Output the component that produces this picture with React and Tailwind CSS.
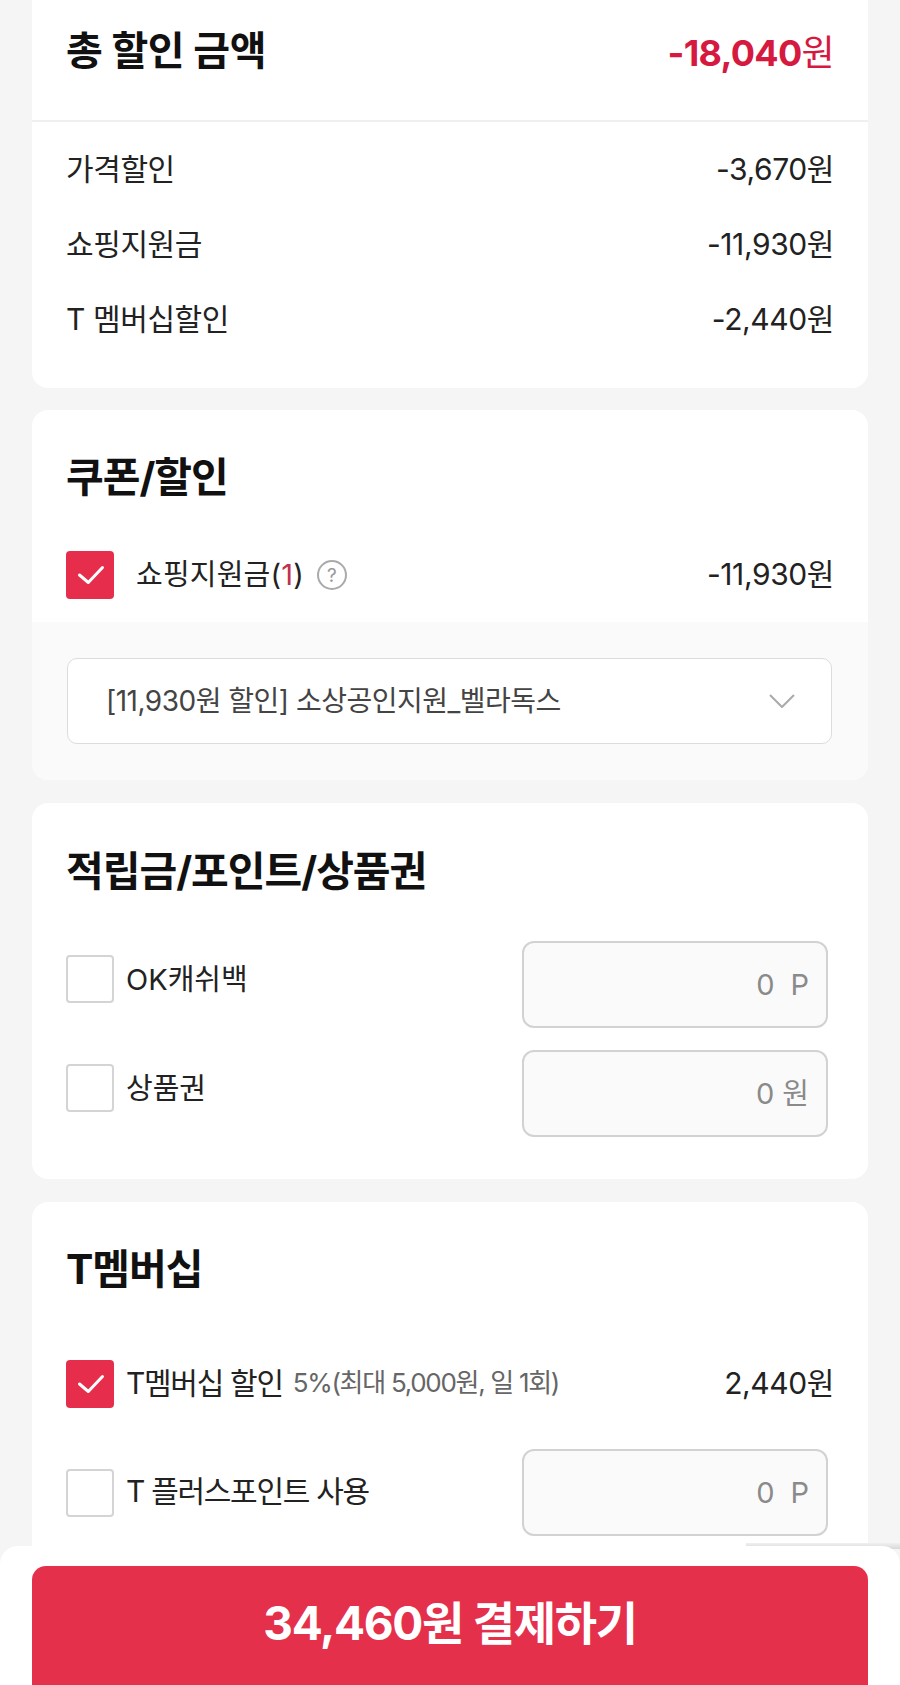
import React from 'react';

const font = { fontFamily: 'Inter, "Noto Sans CJK KR", "Noto Sans", sans-serif' };

const Checkbox = ({ checked }) => (
    <div className={checked
        ? "w-12 h-12 shrink-0 rounded-[4px] bg-[#e62e4c] flex items-center justify-center"
        : "w-12 h-12 shrink-0 rounded-[4px] bg-white border-2 border-[#d4d4d4]"}>
        {checked && (
            <svg width="48" height="48" viewBox="0 0 48 48" fill="none">
                <path d="M13.5 24L22.3 31.5L36.5 16.5" stroke="#fff" strokeWidth="3" strokeLinecap="round" strokeLinejoin="round" />
            </svg>
        )}
    </div>
);

const AmountInput = ({ unit, gap }) => (
    <div className={`w-[306px] h-[87px] rounded-[12px] border-2 border-[#d2d2d2] bg-[#fafafa] flex items-center justify-end pr-[17px] text-[29px] text-[#8a8a8a] ${gap}`}>
        <span>0</span>
        <span>{unit}</span>
    </div>
);

const Heading = ({ children }) => (
    <h2 className="text-[41px] leading-[56px] font-bold text-[#111] tracking-[-1px]">{children}</h2>
);

const summary = [
    { label: "가격할인", value: "-3,670원" },
    { label: "쇼핑지원금", value: "-11,930원" },
    { label: "T 멤버십할인", value: "-2,440원" },
];

export default function App() {
    return (
        <div style={font} className="relative w-[900px] h-[1685px] overflow-hidden bg-[#f5f5f5] text-[#222]">
            <div className="px-8 flex flex-col">
                {/* 총 할인 금액 */}
                <section className="bg-white rounded-b-[16px] h-[388px]">
                    <div className="h-[122px] border-b-2 border-[#efefef] px-[34px] pt-[23px] flex items-start justify-between">
                        <h1 className="text-[40px] leading-[56px] font-bold text-[#111] tracking-[-0.4px]">총 할인 금액</h1>
                        <p className="text-[36px] leading-[56px] font-bold text-[#d6193f] tracking-[-0.7px] mt-[2px]">
                            -18,040<span className="font-normal">원</span>
                        </p>
                    </div>
                    <div className="px-[34px] pt-[25px] flex flex-col gap-[31px]">
                        {summary.map((row) => (
                            <div key={row.label} className="flex justify-between text-[30px] leading-[44px]">
                                <span className="tracking-[-0.4px]">{row.label}</span>
                                <span className="tracking-[-0.4px]">{row.value}</span>
                            </div>
                        ))}
                    </div>
                </section>

                {/* 쿠폰/할인 */}
                <section className="mt-[22px] bg-white rounded-[16px] h-[370px] overflow-hidden flex flex-col">
                    <div className="px-[34px] pt-[39px] h-[212px]">
                        <Heading>쿠폰/할인</Heading>
                        <div className="mt-[46px] flex items-center">
                            <Checkbox checked />
                            <span className="ml-[22px] text-[29px] leading-[44px] tracking-[0.2px]">
                                쇼핑지원금(<span className="text-[#c0324f]">1</span>)
                            </span>
                            <span className="ml-[13px] w-[30px] h-[30px] rounded-full border-2 border-[#aaa] text-[#999] text-[19px] leading-none flex items-center justify-center">?</span>
                            <span className="ml-auto text-[30px] leading-[44px] tracking-[-0.4px] -mt-[3px]">-11,930원</span>
                        </div>
                    </div>
                    <div className="flex-1 bg-[#fafafa] pl-[35px] pr-[36px] pt-9">
                        <div className="h-[86px] rounded-[10px] border-[1.5px] border-[#dcdcdc] bg-white pl-[38px] pr-[35px] flex items-center justify-between">
                            <span className="text-[28px] text-[#444] tracking-[-0.5px]">[11,930원 할인] 소상공인지원_벨라독스</span>
                            <svg width="28" height="16" viewBox="0 0 28 16" fill="none">
                                <path d="M2 2L14 14L26 2" stroke="#aaa" strokeWidth="2" strokeLinejoin="round" />
                            </svg>
                        </div>
                    </div>
                </section>

                {/* 적립금/포인트/상품권 */}
                <section className="mt-[23px] bg-white rounded-[16px] h-[376px] px-[34px] pt-[40px]">
                    <Heading>적립금/포인트/상품권</Heading>
                    <div className="mt-[42px] flex flex-col gap-[22px] pr-[6px]">
                        <div className="flex items-start">
                            <div className="mt-[13.5px]"><Checkbox /></div>
                            <span className="ml-3 text-[29px] leading-[44px] mt-[17px]">OK캐쉬백</span>
                            <div className="ml-auto"><AmountInput unit="P" gap="gap-[16px]" /></div>
                        </div>
                        <div className="flex items-start">
                            <div className="mt-[13.5px]"><Checkbox /></div>
                            <span className="ml-3 text-[29px] leading-[44px] mt-[17px]">상품권</span>
                            <div className="ml-auto"><AmountInput unit="원" gap="gap-[8px]" /></div>
                        </div>
                    </div>
                </section>

                {/* T멤버십 */}
                <section className="mt-[23px] bg-white rounded-t-[16px] h-[500px] px-[34px] pt-[39px]">
                    <Heading>T멤버십</Heading>
                    <div className="mt-[63px] flex items-center">
                        <Checkbox checked />
                        <span className="ml-3 text-[30px] leading-[44px] tracking-[-1.3px] -mt-[3px]">T멤버십 할인</span>
                        <span className="ml-[10px] text-[26px] leading-[44px] text-[#666] tracking-[-1.3px] -mt-[3px]">5%(최대 5,000원, 일 1회)</span>
                        <span className="ml-auto text-[30px] leading-[44px] tracking-[-0.4px] -mt-[3px]">2,440원</span>
                    </div>
                    <div className="mt-[41px] flex items-center pr-[6px]">
                        <Checkbox />
                        <span className="ml-3 text-[30px] leading-[44px] tracking-[-1.3px] -mt-[3px]">T 플러스포인트 사용</span>
                        <div className="ml-auto"><AmountInput unit="P" gap="gap-[16px]" /></div>
                    </div>
                </section>
            </div>

            {/* 하단 결제 바 */}
            <div className="absolute right-0 top-[1543px] w-[154px] h-[6px] bg-gradient-to-b from-[#f0f0f0] to-[#d8d8d8]"></div>
            <div className="absolute left-0 right-0 top-[1546px] bottom-0 bg-white rounded-t-[18px] px-8 pt-[20px]">
                <button className="w-full h-[140px] rounded-[14px] bg-[#e5304c] text-white text-[46px] font-bold tracking-[-1.3px] pb-[26px]">
                    34,460원 결제하기
                </button>
            </div>
        </div>
    );
}
